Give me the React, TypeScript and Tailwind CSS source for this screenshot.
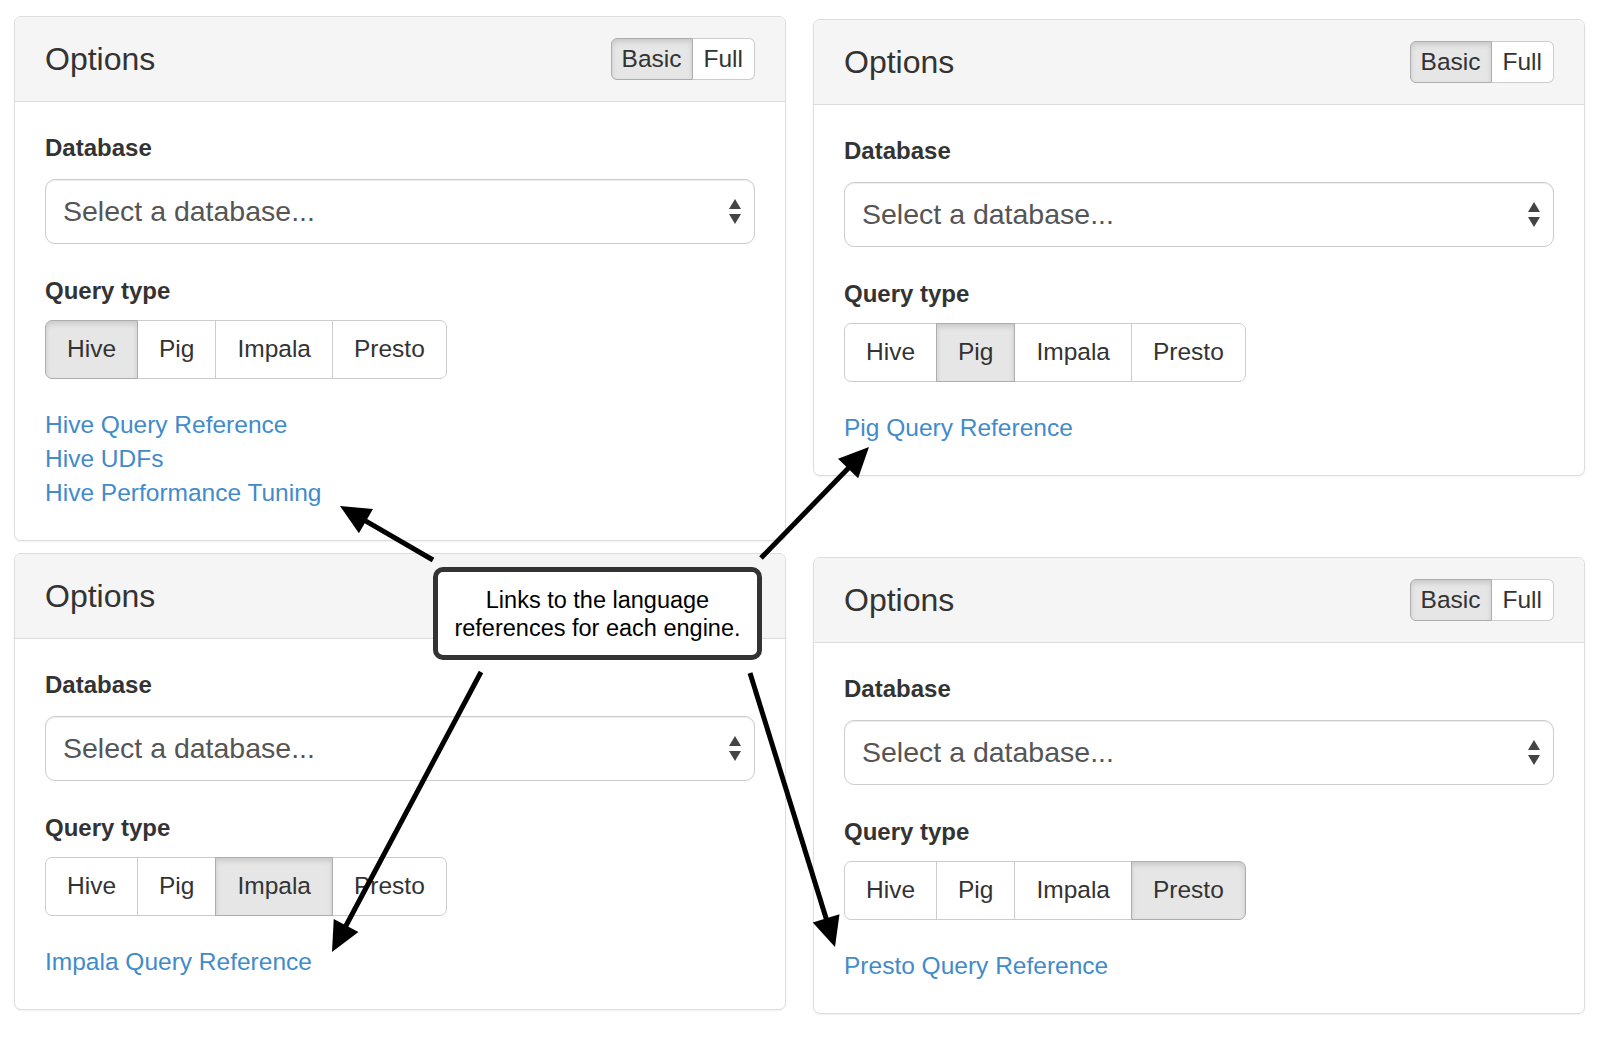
import React from 'react';

const ENGINES = ['Hive', 'Pig', 'Impala', 'Presto'];

type PanelProps = {
  active: string;
  links: string[];
  toggle?: boolean;
};

function Panel({ active, links, toggle = true }: PanelProps) {
  return (
    <div className="w-[772px] bg-white border border-[#dddddd] rounded-[7px] shadow-[0_1px_2px_rgba(0,0,0,0.06)] overflow-hidden text-[#333333]">
      {/* Cabeçalho */}
      <div className="h-[85px] bg-[#f5f5f5] border-b border-[#dddddd] flex items-center justify-between px-[30px]">
        <h3 className="text-[32px] leading-none font-normal">Options</h3>
        {/* no painel de baixo o balão cobre o seletor */}
        {toggle && (
          <div className="flex h-[42px] text-[24.5px] leading-none">
            <span className="flex items-center px-[10px] bg-[#e6e6e6] border border-[#adadad] rounded-l-[6px] shadow-[inset_0_3px_5px_rgba(0,0,0,0.125)]">
              Basic
            </span>
            <span className="flex items-center px-[11px] bg-white border border-l-0 border-[#cccccc] rounded-r-[6px]">
              Full
            </span>
          </div>
        )}
      </div>

      {/* Corpo */}
      <div className="px-[30px] pt-[31px] pb-[30px]">
        <div className="text-[24px] leading-[30px] font-bold">Database</div>
        <div className="mt-[16px] h-[65px] border border-[#cccccc] rounded-[10px] shadow-[inset_0_1px_1px_rgba(0,0,0,0.075)] flex items-center justify-between pl-[17px] pr-[13px]">
          <span className="text-[28.5px] text-[#555555]">Select a database...</span>
          <svg width="12" height="26" viewBox="0 0 12 26">
            <polygon points="6,0 12,10 0,10" fill="#444444" />
            <polygon points="0,15 12,15 6,25" fill="#444444" />
          </svg>
        </div>

        <div className="mt-[32px] text-[24px] leading-[30px] font-bold">Query type</div>
        <div className="mt-[14px] flex h-[59px] w-fit text-[24.5px] leading-none">
          {ENGINES.map((e, i) => {
            const on = e === active;
            return (
              <span
                key={e}
                className={`flex items-center px-[21px] border ${i > 0 ? '-ml-px' : ''} ${
                  i === 0 ? 'rounded-l-[7px]' : ''
                } ${i === ENGINES.length - 1 ? 'rounded-r-[7px]' : ''} ${
                  on
                    ? 'relative z-10 bg-[#e6e6e6] border-[#adadad] shadow-[inset_0_3px_5px_rgba(0,0,0,0.125)]'
                    : 'bg-white border-[#cccccc]'
                }`}
              >
                {e}
              </span>
            );
          })}
        </div>

        <div className="mt-[29px] flex flex-col">
          {links.map((l) => (
            <a key={l} className="text-[24.5px] leading-[34px] text-[#428bca] w-fit">
              {l}
            </a>
          ))}
        </div>
      </div>
    </div>
  );
}

function Arrow({ from, to }: { from: [number, number]; to: [number, number] }) {
  const dx = to[0] - from[0];
  const dy = to[1] - from[1];
  const len = Math.hypot(dx, dy);
  const ux = dx / len;
  const uy = dy / len;
  const bx = to[0] - ux * 30;
  const by = to[1] - uy * 30;
  const px = -uy * 14;
  const py = ux * 14;
  return (
    <g>
      <line x1={from[0]} y1={from[1]} x2={bx + ux * 2} y2={by + uy * 2} stroke="#000" strokeWidth="5" />
      <polygon points={`${to[0]},${to[1]} ${bx + px},${by + py} ${bx - px},${by - py}`} fill="#000" />
    </g>
  );
}

export default function App() {
  return (
    <div
      className="relative w-[1613px] h-[1040px] bg-white flex gap-[27px] pl-[14px] overflow-hidden"
      style={{ fontFamily: '"Liberation Sans", Arial, sans-serif' }}
    >
      <div className="flex flex-col pt-[16px] gap-[12px]">
        <Panel active="Hive" links={['Hive Query Reference', 'Hive UDFs', 'Hive Performance Tuning']} />
        <Panel active="Impala" links={['Impala Query Reference']} toggle={false} />
      </div>
      <div className="flex flex-col pt-[19px] gap-[81px]">
        <Panel active="Pig" links={['Pig Query Reference']} />
        <Panel active="Presto" links={['Presto Query Reference']} />
      </div>

      {/* Setas */}
      <svg className="absolute left-0 top-0 z-20 pointer-events-none" width="1613" height="1040">
        <Arrow from={[433, 560]} to={[340, 506]} />
        <Arrow from={[761, 558]} to={[869, 447]} />
        <Arrow from={[481, 672]} to={[332, 952]} />
        <Arrow from={[750, 673]} to={[835, 947]} />
      </svg>

      {/* Balão */}
      <div className="absolute left-[433px] top-[567px] z-30 w-[329px] h-[93px] bg-white border-[5px] border-[#333333] rounded-[10px] flex items-center justify-center text-center text-[23.5px] leading-[28px] text-black">
        Links to the language
        <br />
        references for each engine.
      </div>
    </div>
  );
}
